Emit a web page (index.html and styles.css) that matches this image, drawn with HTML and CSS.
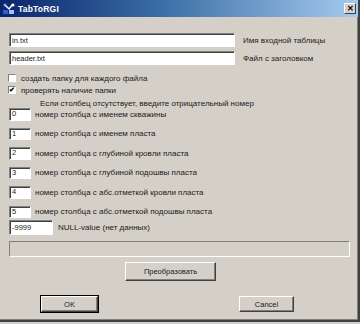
FILE: index.html
```html
<!DOCTYPE html>
<html>
<head>
<meta charset="utf-8">
<link rel="stylesheet" href="styles.css">
</head>
<body>
<div class="window">
  <div class="titlebar">
    <svg class="appicon" width="12" height="12" viewBox="0 0 12 12">
      <rect x="0" y="7" width="5" height="4" fill="#2a5fd0"/>
      <path d="M2 2 L6 6 L10 1" stroke="#ffffff" stroke-width="1.5" fill="none"/>
      <circle cx="2" cy="2" r="1.5" fill="#7fb0ff"/>
      <circle cx="10" cy="2" r="1.5" fill="#ffffff"/>
      <rect x="6" y="7" width="5" height="4" fill="#9cc3ff"/>
    </svg>
    <span class="title">TabToRGI</span>
    <div class="closebtn">✕</div>
  </div>
  <div class="content">
    <div class="filerow r1">
      <div class="field wide">in.txt</div>
      <span class="lbl">Имя входной таблицы</span>
    </div>
    <div class="filerow r2">
      <div class="field wide">header.txt</div>
      <span class="lbl">Файл с заголовком</span>
    </div>
    <div class="check c1"><span class="box"></span><span class="lbl">создать папку для каждого файла</span></div>
    <div class="check c2"><span class="box checked">✔</span><span class="lbl">проверять наличие папки</span></div>
    <div class="note">Если столбец отсутствует, введите отрицательный номер</div>
    <div class="numrows">
      <div class="numrow"><div class="field num">0</div><span class="lbl">номер столбца с именем скважины</span></div>
      <div class="numrow"><div class="field num">1</div><span class="lbl">номер столбца с именем пласта</span></div>
      <div class="numrow"><div class="field num">2</div><span class="lbl">номер столбца с глубиной кровли пласта</span></div>
      <div class="numrow"><div class="field num">3</div><span class="lbl">номер столбца с глубиной подошвы пласта</span></div>
      <div class="numrow"><div class="field num">4</div><span class="lbl">номер столбца с абс.отметкой кровли пласта</span></div>
      <div class="numrow"><div class="field num">5</div><span class="lbl">номер столбца с абс.отметкой подошвы пласта</span></div>
    </div>
    <div class="nullrow"><div class="field nullf">-9999</div><span class="lbl">NULL-value (нет данных)</span></div>
    <div class="progress"></div>
    <div class="convrow"><div class="btn conv">Преобразовать</div></div>
    <div class="btnrow">
      <div class="btn ok">OK</div>
      <div class="btn cancel">Cancel</div>
    </div>
  </div>
</div>
</body>
</html>
```
FILE: styles.css
```css
* { box-sizing: border-box; }
html, body { margin: 0; padding: 0; }
body {
  width: 360px; height: 324px; overflow: hidden;
  font-family: "Liberation Sans", Arial, sans-serif;
  font-size: 8px; color: #1a1a1a;
  background: #d4d0c8;
}
.window {
  width: 360px; height: 322px;
  background: #d4d0c8;
  border-right: 2px solid #404040;
  border-bottom: 2px solid #404040;
  box-shadow: inset -1px -1px 0 #808080;
  display: flex; flex-direction: column;
}
.titlebar {
  height: 17px;
  background: linear-gradient(to right, #0a246a 0%, #3a6ea5 45%, #a6caf0 100%);
  display: flex; align-items: center;
  padding: 0 2px 0 3px;
}
.appicon { flex: none; }
.title {
  color: #fff; font-weight: bold; font-size: 8.5px;
  margin-left: 3px; letter-spacing: 0.2px;
}
.closebtn {
  margin-left: auto;
  width: 12px; height: 11px;
  background: #d4d0c8;
  border-top: 1px solid #fff; border-left: 1px solid #fff;
  border-right: 1px solid #404040; border-bottom: 1px solid #404040;
  font-size: 8px; font-weight: bold; line-height: 9px; text-align: center;
  color: #000;
}
.content { padding: 0 10px 0 9px; display: flex; flex-direction: column; }
.field {
  background: #fff;
  border-top: 1px solid #808080; border-left: 1px solid #808080;
  border-right: 1px solid #fff; border-bottom: 1px solid #fff;
  box-shadow: inset 1px 1px 0 #404040;
  padding-left: 2px;
  font-size: 7.5px;
  display: flex; align-items: center;
}
.filerow { display: flex; align-items: center; }
.r1 { margin-top: 16px; }
.r2 { margin-top: 4px; }
.wide { width: 226px; height: 14px; }
.filerow .lbl { margin-left: 8px; }
.check { display: flex; align-items: center; height: 8px; margin-left: -1px; }
.c1 { margin-top: 9px; }
.c2 { margin-top: 4px; }
.box {
  width: 8px; height: 8px; background: #fff;
  border-top: 1px solid #808080; border-left: 1px solid #808080;
  border-right: 1px solid #fff; border-bottom: 1px solid #fff;
  font-size: 7px; line-height: 6px; text-align: center; color: #000;
  font-weight: bold;
  flex: none;
}
.check .lbl { margin-left: 5px; }
.note { margin-top: 5px; margin-left: 31px; height: 9px; line-height: 9px; }
.numrows { display: flex; flex-direction: column; gap: 7px; margin-top: 0; }
.numrow { display: flex; align-items: center; }
.num { width: 22px; height: 12.5px; align-items: flex-start; padding-top: 0; }
.numrow .lbl { margin-left: 4px; }
.nullrow { display: flex; align-items: center; margin-top: 2px; }
.nullf { width: 44px; height: 15px; }
.nullrow .lbl { margin-left: 5px; }
.progress {
  margin-top: 6px; width: 341px; height: 16px;
  border-top: 1px solid #808080; border-left: 1px solid #808080;
  border-right: 1px solid #fff; border-bottom: 1px solid #fff;
}
.btn {
  background: #d4d0c8;
  border-top: 1px solid #fff; border-left: 1px solid #fff;
  border-right: 1px solid #404040; border-bottom: 1px solid #404040;
  box-shadow: inset -1px -1px 0 #808080;
  display: flex; align-items: center; justify-content: center;
  font-size: 7.5px;
}
.convrow { display: flex; margin-top: 5px; padding-left: 116px; }
.conv { width: 91px; height: 19px; }
.btnrow { display: flex; margin-top: 15px; padding-left: 32px; }
.ok { width: 57px; height: 16px; outline: 1px solid #000; outline-offset: 0; }
.cancel { width: 55px; height: 16px; margin-left: 141px; }
```
